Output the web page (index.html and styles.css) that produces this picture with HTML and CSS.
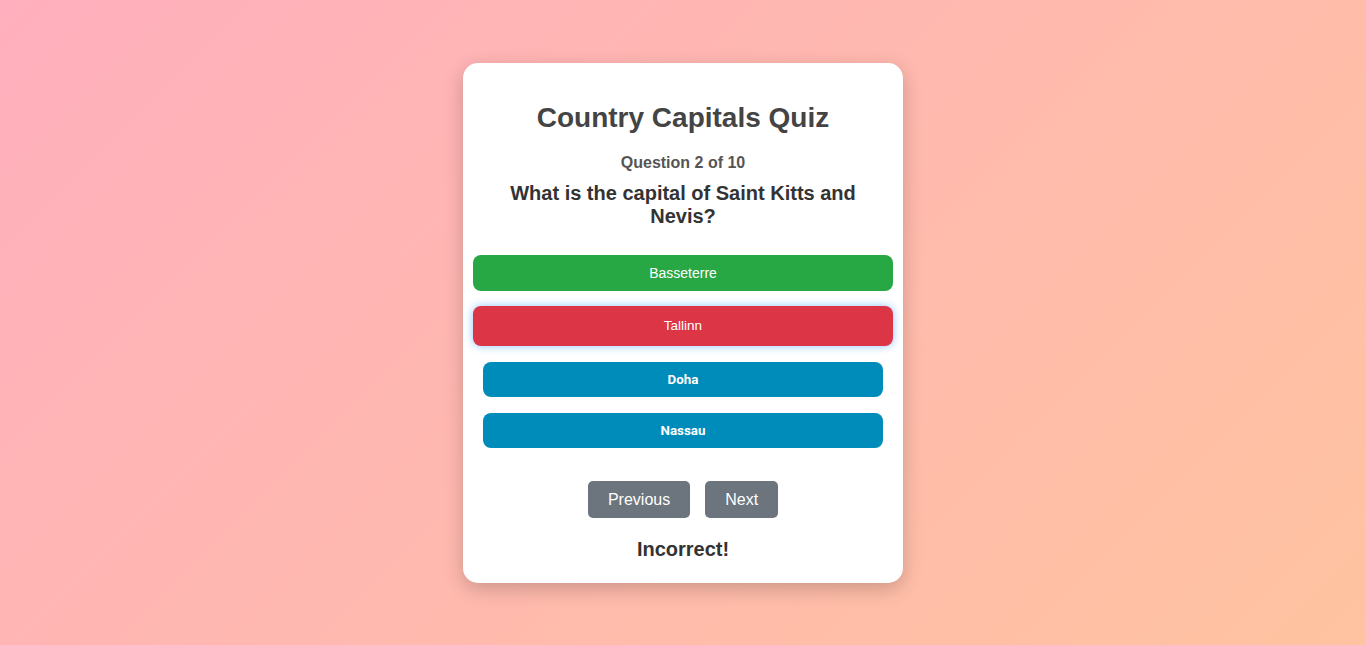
FILE: index.html
```html
<!DOCTYPE html>
<html lang="en">
<head>
<meta charset="utf-8">
<title>Country Capitals Quiz</title>
<link rel="stylesheet" href="styles.css">
</head>
<body>
<main class="quiz-card">
  <h1 class="quiz-title">Country Capitals Quiz</h1>
  <p class="question-count">Question 2 of 10</p>
  <h2 class="question">What is the capital of Saint Kitts and Nevis?</h2>
  <div class="options">
    <button class="option correct">Basseterre</button>
    <button class="option incorrect">Tallinn</button>
    <button class="option">Doha</button>
    <button class="option">Nassau</button>
  </div>
  <div class="nav">
    <button class="nav-btn">Previous</button>
    <button class="nav-btn">Next</button>
  </div>
  <p class="feedback">Incorrect!</p>
</main>
</body>
</html>
```
FILE: styles.css
```css
html, body {
  height: 100%;
}
body {
  margin: 0;
  font-family: "Liberation Sans", Arial, sans-serif;
  background: linear-gradient(135deg, #ffafbd, #ffc3a0);
  display: flex;
  align-items: center;
  justify-content: center;
}
.quiz-card {
  box-sizing: border-box;
  width: 440px;
  background: #fff;
  border-radius: 15px;
  padding: 20px 20px 22px;
  box-shadow: 0 6px 20px rgba(0, 0, 0, 0.2);
  text-align: center;
}
.quiz-title {
  font-size: 28px;
  font-weight: bold;
  color: #444;
  margin: 19px 0 20px;
  line-height: 32px;
}
.question-count {
  font-size: 16px;
  font-weight: bold;
  color: #555;
  margin: 0 0 10px;
  line-height: 18px;
}
.question {
  font-size: 20px;
  font-weight: bold;
  color: #333;
  margin: 0 0 27px;
  line-height: 23px;
}
.options {
  display: flex;
  flex-direction: column;
  align-items: center;
  gap: 16px;
}
.option {
  box-sizing: border-box;
  width: 400px;
  height: 35px;
  border: none;
  border-radius: 8px;
  background: #008cba;
  color: #fff;
  font-family: Roboto, "Liberation Sans", sans-serif;
  font-size: 13.33px;
  font-weight: bold;
  padding: 0;
}
.option.correct {
  width: 420px;
  height: 36px;
  margin-bottom: -1px;
  background: #28a745;
  font-family: "Liberation Sans", Arial, sans-serif;
  font-weight: normal;
  font-size: 14px;
}
.option.incorrect {
  width: 420px;
  height: 40px;
  background: #dc3545;
  font-family: "Liberation Sans", Arial, sans-serif;
  font-weight: normal;
  font-size: 13.5px;
  box-shadow: 0 0 8px rgba(0, 123, 255, 0.45);
}
.nav {
  display: flex;
  justify-content: center;
  gap: 15px;
  margin-top: 33px;
}
.nav-btn {
  border: none;
  border-radius: 5px;
  background: #6c757d;
  color: #fff;
  font-family: "Liberation Sans", Arial, sans-serif;
  font-size: 16px;
  line-height: 17px;
  padding: 10px 20px;
}
.feedback {
  font-size: 20px;
  font-weight: bold;
  color: #333;
  margin: 20px 0 0;
  line-height: 23px;
}
```
